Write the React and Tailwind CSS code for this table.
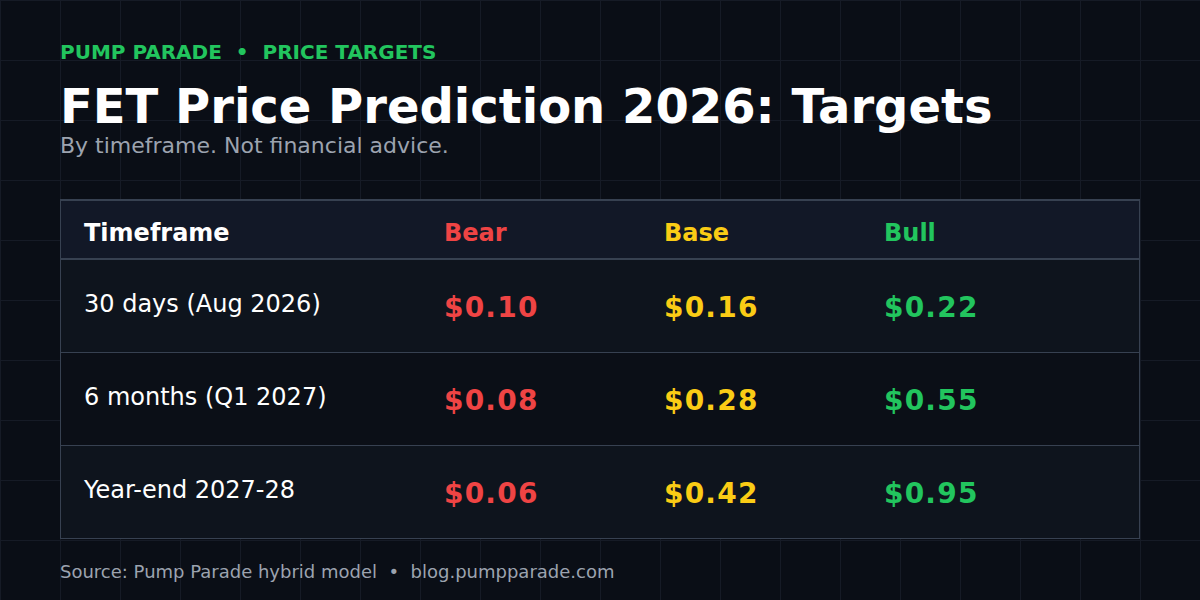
const rows = [
  { label: '30 days (Aug 2026)', bear: '$0.10', base: '$0.16', bull: '$0.22', bg: 'bg-[#0e141d]', h: 'h-[93px] border-b' },
  { label: '6 months (Q1 2027)', bear: '$0.08', base: '$0.28', bull: '$0.55', bg: 'bg-[#0b0f17]', h: 'h-[93px] border-b' },
  { label: 'Year-end 2027-28', bear: '$0.06', base: '$0.42', bull: '$0.95', bg: 'bg-[#0e141d]', h: 'h-[92px]' },
]

export default function App() {
  return (
    <div
      className="w-[1200px] h-[600px] overflow-hidden bg-[#0a0e16] bg-[linear-gradient(to_right,#161b26_1px,transparent_1px),linear-gradient(to_bottom,#161b26_1px,transparent_1px)] bg-[size:60px_60px] px-[60px] pt-[40px]"
      style={{ fontFamily: '"DejaVu Sans", sans-serif' }}
    >
      <div className="text-[20px] leading-[24px] font-bold text-[#22c55e] whitespace-pre">PUMP PARADE  •  PRICE TARGETS</div>
      <h1 className="mt-[14px] text-[48px] leading-[56px] font-bold text-white">FET Price Prediction 2026: Targets</h1>
      <p className="text-[22px] leading-[24px] text-[#9ca3af]">By timeframe. Not financial advice.</p>

      <div className="mt-[41px] w-[1080px] border border-t-2 border-[#374151]">
        <div className="grid grid-cols-[360px_220px_220px_1fr] h-[59px] bg-[#121827] border-b-2 border-[#374151] pt-[20px] text-[24px] leading-none font-bold">
          <div className="pl-[23px] text-white">Timeframe</div>
          <div className="pl-[23px] text-[#ef4444]">Bear</div>
          <div className="pl-[23px] text-[#facc15]">Base</div>
          <div className="pl-[23px] text-[#22c55e]">Bull</div>
        </div>
        {rows.map((r) => (
          <div
            key={r.label}
            className={`grid grid-cols-[360px_220px_220px_1fr] pt-[32px] border-[#374151] ${r.h} ${r.bg}`}
          >
            <div className="pl-[23px] text-[24px] leading-none text-white">{r.label}</div>
            <div className="pl-[23px] pt-[2px] text-[28px] leading-none font-bold tracking-[1.2px] text-[#ef4444]">{r.bear}</div>
            <div className="pl-[23px] pt-[2px] text-[28px] leading-none font-bold tracking-[1.2px] text-[#facc15]">{r.base}</div>
            <div className="pl-[23px] pt-[2px] text-[28px] leading-none font-bold tracking-[1.2px] text-[#22c55e]">{r.bull}</div>
          </div>
        ))}
      </div>

      <div className="mt-[21px] text-[18px] leading-[24px] text-[#9ca3af] whitespace-pre">Source: Pump Parade hybrid model  •  blog.pumpparade.com</div>
    </div>
  )
}
